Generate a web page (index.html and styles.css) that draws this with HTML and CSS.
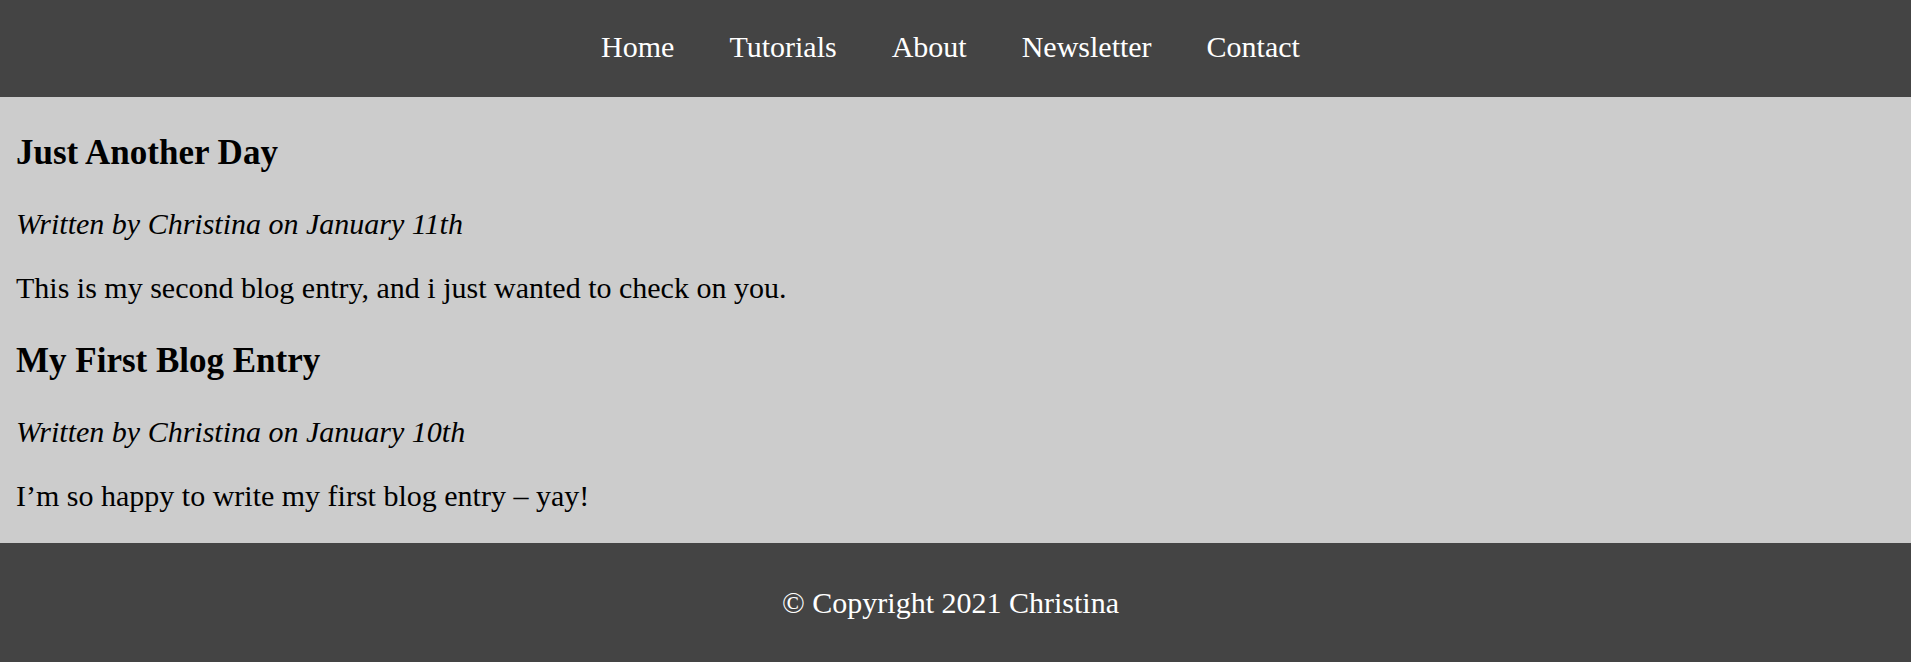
FILE: index.html
```html
<!DOCTYPE html>
<html lang="en">
<head>
<meta charset="utf-8">
<title>Christina's Blog</title>
<link rel="stylesheet" href="styles.css">
</head>
<body>
<nav class="site-nav">
  <ul class="nav-list">
    <li><a class="nav-link" href="#">Home</a></li>
    <li><a class="nav-link" href="#">Tutorials</a></li>
    <li><a class="nav-link" href="#">About</a></li>
    <li><a class="nav-link" href="#">Newsletter</a></li>
    <li><a class="nav-link" href="#">Contact</a></li>
  </ul>
</nav>
<main class="content">
  <article class="post">
    <h3 class="post-title">Just Another Day</h3>
    <p class="post-meta"><em>Written by Christina on January 11th</em></p>
    <p class="post-body">This is my second blog entry, and i just wanted to check on you.</p>
  </article>
  <article class="post">
    <h3 class="post-title">My First Blog Entry</h3>
    <p class="post-meta"><em>Written by Christina on January 10th</em></p>
    <p class="post-body">I’m so happy to write my first blog entry – yay!</p>
  </article>
</main>
<footer class="site-footer">
  <p class="copyright">© Copyright 2021 Christina</p>
</footer>
</body>
</html>
```

FILE: styles.css
```css
html, body {
  margin: 0;
  padding: 0;
  background: #ffffff;
}

body {
  font-family: "Liberation Serif", "Times New Roman", serif;
  font-size: 30px;
  color: #000000;
}

.site-nav {
  background: #444444;
  padding: 29.5px 10px 33px 0;
}

.nav-list {
  display: flex;
  justify-content: center;
  gap: 55px;
  list-style: none;
  margin: 0;
  padding: 0;
}

.nav-link {
  color: #ffffff;
  text-decoration: none;
}

.content {
  background: #cccccc;
  padding: 0 16px;
  display: flow-root;
}

.post-title {
  font-size: 35px;
  font-weight: bold;
  margin: 36px 0 34px 0;
}

.post-meta,
.post-body {
  margin: 30px 0;
}

.site-footer {
  background: #444444;
  color: #ffffff;
  text-align: center;
  padding: 43px 10px 42px 0;
}

.copyright {
  margin: 0;
}
```
